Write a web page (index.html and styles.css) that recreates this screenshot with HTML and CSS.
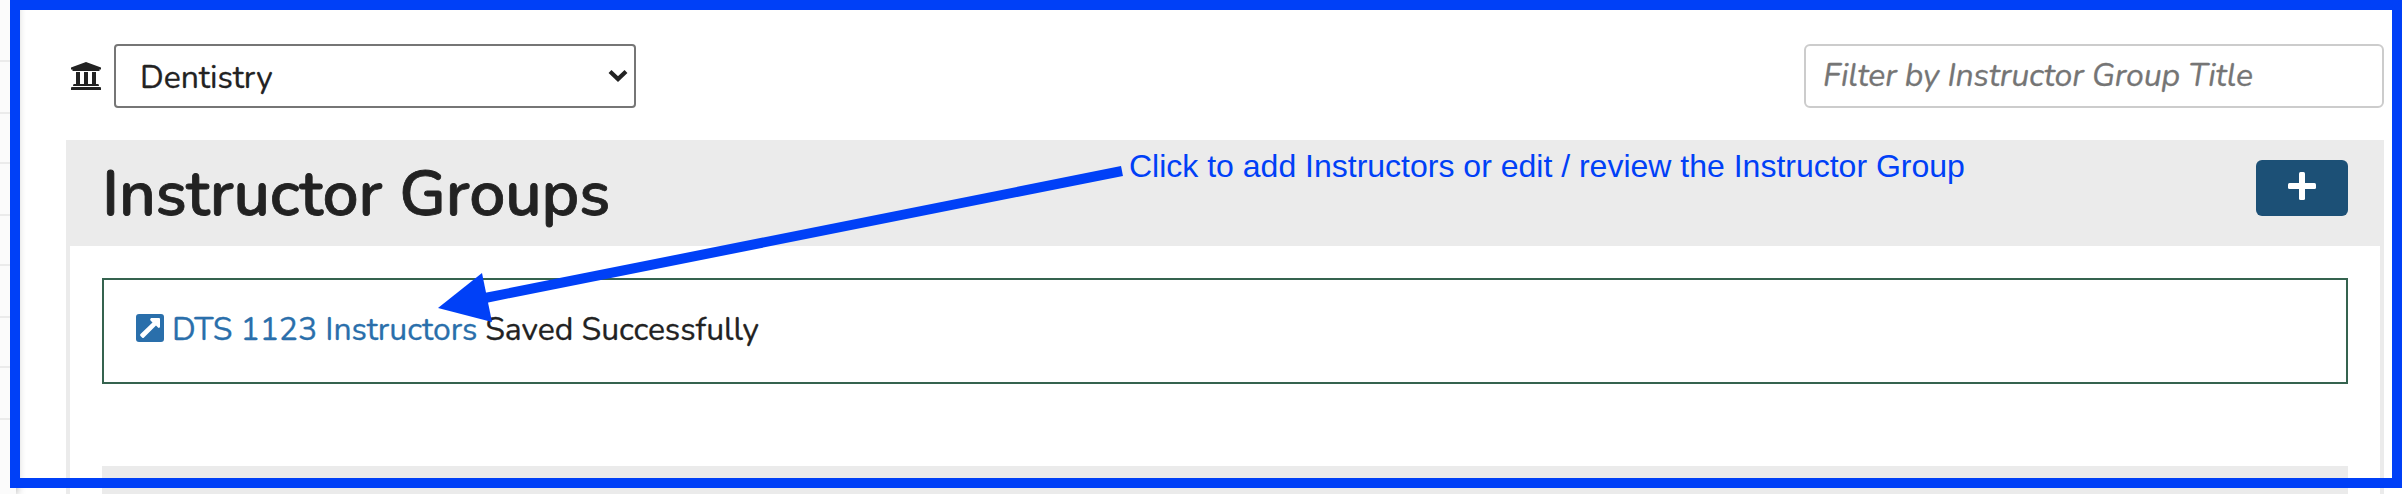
FILE: index.html
```html
<!DOCTYPE html>
<html lang="en">
<head>
<meta charset="utf-8">
<title>Instructor Groups</title>
<link rel="stylesheet" href="styles.css">
</head>
<body>
<div class="page">
  <aside class="gutter"><i></i><i></i><i></i><i></i><i></i><i></i><i></i><i></i></aside>
  <main class="content">
    <div class="filters">
      <div class="school">
        <svg class="bank" viewBox="0 0 30 28"><path d="M15 0 L30 5.6 V7.500 H28.500 V9 H1.500 V7.500 H0 V5.600 Z M5 10 H9 V22 H13 V10 H17 V22 H21 V10 H25 V22 H27 Q28 22 28 24 H2 Q2 22 3 22 H5 Z M1 25 H29 Q30 25 30 26 V28 H0 V26 Q0 25 1 25 Z"/></svg>
        <div class="select"><span class="t dent">Dentistry</span>
          <svg class="chev" viewBox="0 0 20 14"><path d="M2 2.500 L10 10 L18 2.500"/></svg></div>
      </div>
      <div class="search"><span class="t ph">Filter by Instructor Group Title</span></div>
    </div>
    <section class="panel">
      <header class="head">
        <h1 class="t title">Instructor Groups</h1>
        <button class="add" aria-label="Add"><svg viewBox="0 0 28 28"><rect x="11" width="6" height="28" rx="1.500"/><rect y="11" width="28" height="6" rx="1.500"/></svg></button>
      </header>
      <div class="saved">
        <svg class="ext" viewBox="0 0 28 28"><rect width="28" height="28" rx="3"/><path d="M15 4h8q1 0 1 1v8q-1 1.500-2 .5l-2-2L8 23.500q-1 1-2 0l-1.500-1.500q-1-1 0-2L16.500 8.500l-2-2q-1-1.500.5-2.500z" fill="#fff"/></svg>
        <a class="t link">DTS 1123 Instructors</a>
        <span class="t msg">Saved Successfully</span>
      </div>
      <div class="next"></div>
    </section>
  </main>
</div>
<div class="frame"></div>
<svg class="arrow" viewBox="0 0 2404 494"><path d="M1122 171 L485 298" stroke="#0040f7" stroke-width="10"/><path d="M438 308 L482 273 L492 322 Z" fill="#0040f7"/></svg>
<div class="t note">Click to add Instructors or edit / review the Instructor Group</div>
</body>
</html>
```
FILE: styles.css
```css
* { box-sizing: border-box; }
body { margin: 0; background: #fff; color: #222; font-family: Nunito, "Nunito Sans", "Open Sans", sans-serif; overflow: hidden; }
.page { display: flex; height: 494px; overflow: hidden; }
.t { white-space: nowrap; display: block; }
.gutter { width: 16px; background: #fbfbfb; display: flex; flex-direction: column; padding-top: 8px; box-shadow: 0 0 10px rgba(0,0,0,.4); }
.gutter i { flex: 0 0 50px; border-bottom: 2px solid #ebebeb; }
.gutter i:nth-child(even) { flex-basis: 52px; }
.gutter i:first-child { flex-basis: 54px; }
.content { flex: 1; padding: 44px 20px 0 50px; }
.filters { display: flex; justify-content: space-between; height: 64px; }
.school { display: flex; align-items: center; padding-left: 5px; gap: 13px; }
.bank { width: 30px; height: 28px; fill: #222; }
.select { width: 522px; height: 64px; border: 2px solid #767676; border-radius: 4px; display: flex; align-items: center; justify-content: space-between; padding: 0 6px 0 24px; }
.chev { width: 20px; height: 14px; fill: none; stroke: #222; stroke-width: 4.200; }
.search { width: 580px; height: 64px; border: 2px solid #ccc; border-radius: 6px; padding-left: 17px; display: flex; align-items: center; }
.dent, .ph, .link, .msg { font-size: 32px; line-height: 44px; letter-spacing: -.06px; -webkit-text-stroke: .3px currentColor; }
.dent { padding-top: 3px; }
.ph { color: #757575; font-style: italic; letter-spacing: -.12px; }
.panel { margin-top: 32px; border: 4px solid #ebebeb; border-top: 0; height: 400px; }
.head { background: #ebebeb; height: 106px; display: flex; justify-content: space-between; padding: 0 32px; }
.title { margin: 16px 0 0; font-size: 64px; line-height: 76px; font-weight: 600; letter-spacing: -.1px; -webkit-text-stroke: .8px currentColor; }
.add { width: 92px; height: 56px; margin-top: 20px; border: 0; padding: 0 0 4px; border-radius: 6px; background: #1c5076; display: flex; align-items: center; justify-content: center; }
.add svg { width: 28px; height: 28px; fill: #fff; }
.saved { margin: 32px 32px 0; height: 106px; border: 2px solid #35634f; display: flex; padding: 28px 0 0 32px; }
.ext { width: 28px; height: 28px; margin: 6px 8px 0 0; fill: #2a6fab; flex: none; }
.link { color: #2a6fab; }
.msg { margin-left: 8px; }
.next { margin: 82px 32px 0; height: 40px; background: #ebebeb; }
.frame { position: absolute; left: 10px; top: 0; width: 2392px; height: 488px; border: 10px solid #0040f7; }
.arrow { position: absolute; left: 0; top: 0; width: 2404px; height: 494px; }
.note { position: absolute; left: 1129px; top: 148px; font: 32px/37px "Liberation Sans", Arial, sans-serif; color: #0040f7; }
```
